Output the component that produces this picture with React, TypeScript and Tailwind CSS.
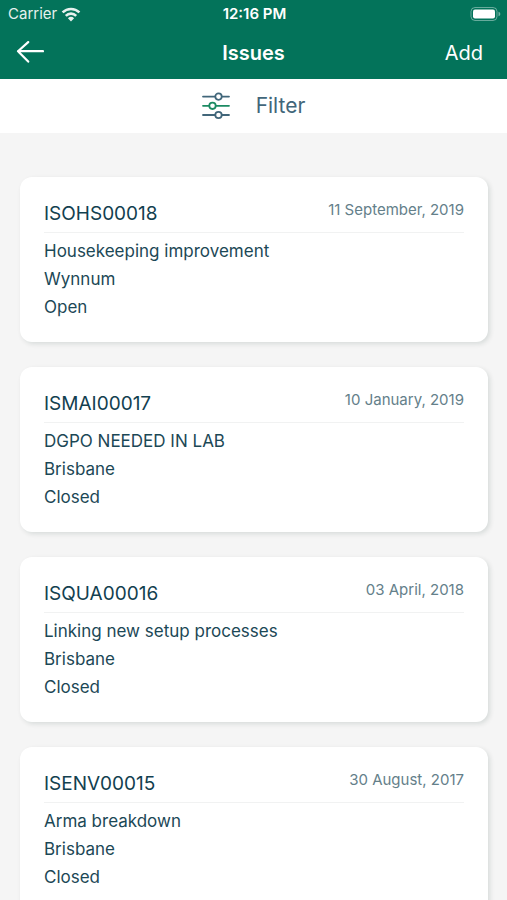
interface Issue {
    id: string;
    date: string;
    title: string;
    site: string;
    status: string;
}

const issues: Issue[] = [
    { id: "ISOHS00018", date: "11 September, 2019", title: "Housekeeping improvement", site: "Wynnum", status: "Open" },
    { id: "ISMAI00017", date: "10 January, 2019", title: "DGPO NEEDED IN LAB", site: "Brisbane", status: "Closed" },
    { id: "ISQUA00016", date: "03 April, 2018", title: "Linking new setup processes", site: "Brisbane", status: "Closed" },
    { id: "ISENV00015", date: "30 August, 2017", title: "Arma breakdown", site: "Brisbane", status: "Closed" },
];

function StatusBar() {
    return (
        <div className="grid grid-cols-3 items-center h-7 pl-2 pr-1.5 text-[15px]">
            <div className="flex items-center gap-1 opacity-90">
                <span>Carrier</span>
                <svg width="20" height="15" viewBox="0 0 20 15" fill="none" stroke="currentColor" strokeWidth="2.6">
                    <path d="M1.6 5.4a12 12 0 0 1 16.8 0" />
                    <path d="M4.8 8.8a7.4 7.4 0 0 1 10.4 0" />
                    <path d="M10 14.4 6.9 11.2a4.5 4.5 0 0 1 6.2 0Z" fill="currentColor" stroke="none" />
                </svg>
            </div>
            <span className="text-center font-semibold">12:16 PM</span>
            <svg className="justify-self-end" width="31" height="15" viewBox="0 0 31 15">
                <rect x="1" y="0.5" width="26" height="13" rx="4" fill="none" stroke="#fff" strokeOpacity="0.4" />
                <rect x="3" y="2.5" width="22" height="9" rx="2" fill="#fff" />
                <path d="M28.5 4.7v4.6c1-.3 1.8-1.2 1.8-2.3s-.8-2-1.8-2.3Z" fill="#fff" fillOpacity="0.45" />
            </svg>
        </div>
    );
}

function IssueCard({ issue }: { issue: Issue }) {
    return (
        <li className="rounded-xl bg-white px-6 pt-[21px] pb-[21px] shadow-[2px_2px_5px_rgba(0,40,35,0.12)]">
            <div className="flex justify-between border-b border-[#f1f2f2] pb-0.5">
                <h2 className="text-[19px] leading-8 text-[#12404f]">{issue.id}</h2>
                <time className="text-[15px] leading-6 text-[#64808a]">{issue.date}</time>
            </div>
            <div className="pt-1 text-[17px] leading-7 text-[#1c4856]">
                <p>{issue.title}</p>
                <p>{issue.site}</p>
                <p>{issue.status}</p>
            </div>
        </li>
    );
}

export default function App() {
    return (
        <div className="flex h-screen flex-col bg-[#f5f5f5] font-['Inter',sans-serif]">
            <header className="shrink-0 bg-[#03735a] text-white">
                <StatusBar />
                <div className="grid h-[51px] grid-cols-3 items-center px-4 pb-0.5 text-xl">
                    <button type="button" aria-label="Back" className="justify-self-start">
                        <svg width="28" height="24" viewBox="0 0 28 24" fill="none" stroke="currentColor" strokeWidth="2.2" strokeLinecap="round" strokeLinejoin="round">
                            <path d="M27 10.2H2M12.2 1.1 2 10.2l10.2 10.4" />
                        </svg>
                    </button>
                    <h1 className="text-center font-semibold">Issues</h1>
                    <button type="button" className="justify-self-end pr-2">Add</button>
                </div>
            </header>
            <button type="button" className="flex h-[54px] shrink-0 items-center justify-center gap-[26px] bg-white text-[21px] text-[#41667a]">
                <svg width="28" height="28" viewBox="0 0 28 28" fill="none" stroke="currentColor" strokeWidth="1.8" strokeLinecap="round">
                    <path d="M1 4.6h12M20 4.6h7" />
                    <circle cx="16.5" cy="4.6" r="3.2" />
                    <g stroke="#1c8a63">
                        <path d="M1 13.8h6M14 13.8h13" />
                        <circle cx="10.5" cy="13.8" r="3.2" />
                    </g>
                    <path d="M1 23h12M20 23h7" />
                    <circle cx="16.5" cy="23" r="3.2" />
                </svg>
                <span>Filter</span>
            </button>
            <main className="min-h-0 flex-1 overflow-y-auto pl-5 pr-[19px] pt-11 pb-6 [scrollbar-width:none]">
                <ul className="flex flex-col gap-[25px]">
                    {issues.map((issue) => (
                        <IssueCard key={issue.id} issue={issue} />
                    ))}
                </ul>
            </main>
        </div>
    );
}
